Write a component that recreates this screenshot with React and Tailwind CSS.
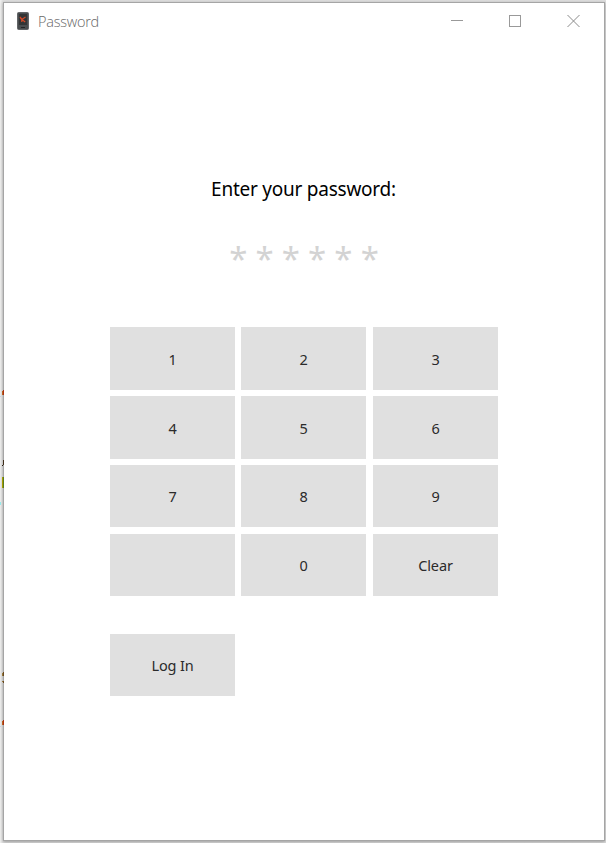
import React from 'react';

const KEYS = ['1', '2', '3', '4', '5', '6', '7', '8', '9', '', '0', 'Clear'];

function Key({ label }) {
  return (
    <button className="flex items-center justify-center bg-[#e0e0e0] pt-[0.2px] text-[14.5px] leading-5 tracking-[-0.15px] text-[#2b2b2b]">
      {label}
    </button>
  );
}

function PhoneIcon() {
  return (
    <svg width="12" height="18" viewBox="0 0 12 18" className="block">
      <rect x="0.5" y="0.5" width="11" height="17" rx="1" fill="#4a4d4f" stroke="#626567" />
      <rect x="2" y="2" width="8" height="11" fill="#333536" />
      <path d="M3 5 L4.8 7.5 M8.5 5 L4.8 7.5 V10 M5 7.5 L8.2 10" fill="none" stroke="#d14a28" strokeWidth="1.3" />
      <path d="M4 15.5 H8" stroke="#222426" />
    </svg>
  );
}

function BackdropEdge() {
  return (
    <svg width="3" height="843" viewBox="0 0 3 843" shapeRendering="crispEdges" className="absolute left-0 top-0">
      <path d="M2 391h1v4h-1zM2 721h1v4h-1z" fill="#d46c20" />
      <path d="M2 465h1v1h-1z" fill="#302010" />
      <path d="M2 477h1v11h-1z" fill="#c0b000" />
      <path d="M0 502h1v3h-1z" fill="#98f0f0" />
      <path d="M2 673h1v3h-1zM2 681h1v1h-1z" fill="#aa8840" />
      <path d="M0 396h1v1h-1zM0 726h1v1h-1z" fill="#c8d4ee" />
    </svg>
  );
}

function EdgeMarks() {
  return (
    <svg width="1" height="839" viewBox="3 2 1 839" shapeRendering="crispEdges" className="absolute -left-px -top-px">
      <path d="M3 390h1v5h-1zM3 720h1v5h-1z" fill="#a83010" />
      <path d="M3 460h1v5h-1z" fill="#40301c" />
      <path d="M3 477h1v11h-1z" fill="#557c20" />
      <path d="M3 672h1v4h-1zM3 681h1v2h-1z" fill="#684820" />
    </svg>
  );
}

export default function App() {
  return (
    <div className="relative h-[843px] w-[606px] bg-gradient-to-r from-[#f0f0ef] from-0% via-[#dedede] via-[0.5%] to-[#dedede] pl-[3px] pt-[2px] font-['Noto_Sans','Open_Sans',sans-serif]">
      <BackdropEdge />
      <main className="relative flex h-[839px] w-[602px] flex-col border border-[#a5a5a5] bg-white shadow-[0_1px_3px_rgba(0,0,0,0.3)]">
        <EdgeMarks />
        <header className="flex h-[36px] items-center justify-between pl-[13px] pr-[24px]">
          <div className="flex items-center gap-[9px]">
            <PhoneIcon />
            <h1 className="pt-[2px] font-['Open_Sans',sans-serif] text-[14.5px] font-light leading-5 tracking-[-0.25px] text-[#686868]">Password</h1>
          </div>
          <div className="flex items-center gap-[46px]">
            <svg width="12" height="12" shapeRendering="crispEdges"><path d="M0 5.5H12" stroke="#999" /></svg>
            <svg width="12" height="12" shapeRendering="crispEdges"><rect x="0.5" y="0.5" width="11" height="11" fill="none" stroke="#999" /></svg>
            <svg width="13" height="12"><path d="M0.5 0L12.5 12M12.5 0L0.5 12" stroke="#8a8a8a" /></svg>
          </div>
        </header>
        <section className="flex flex-col pl-[106px] pt-[136px]">
          <h2 className="w-[387px] text-center text-[19px] leading-[28px] tracking-[-0.24px] text-black">Enter your password:</h2>
          <div className="mt-[32px] flex h-[36px] w-[388px] justify-center text-[33px] leading-[48px] text-[#d3d3d3]">
            {Array.from({ length: 6 }, (_, i) => (
              <span key={i} className="w-[26.3px] text-center">*</span>
            ))}
          </div>
          <div className="mt-[56px] grid grid-cols-[131px_132px_125px] grid-rows-[69px_69px_69px_62px]">
            {KEYS.map((label, i) => (
              <div
                key={i}
                className={`grid ${i % 3 === 0 ? 'pr-[6px]' : i % 3 === 1 ? 'pr-[7px]' : ''} ${i < 6 ? 'pb-[6px]' : i < 9 ? 'pb-[7px]' : ''}`}
              >
                <Key label={label} />
              </div>
            ))}
          </div>
          <div className="mt-[38px] grid h-[62px] w-[125px]">
            <Key label="Log In" />
          </div>
        </section>
      </main>
    </div>
  );
}
